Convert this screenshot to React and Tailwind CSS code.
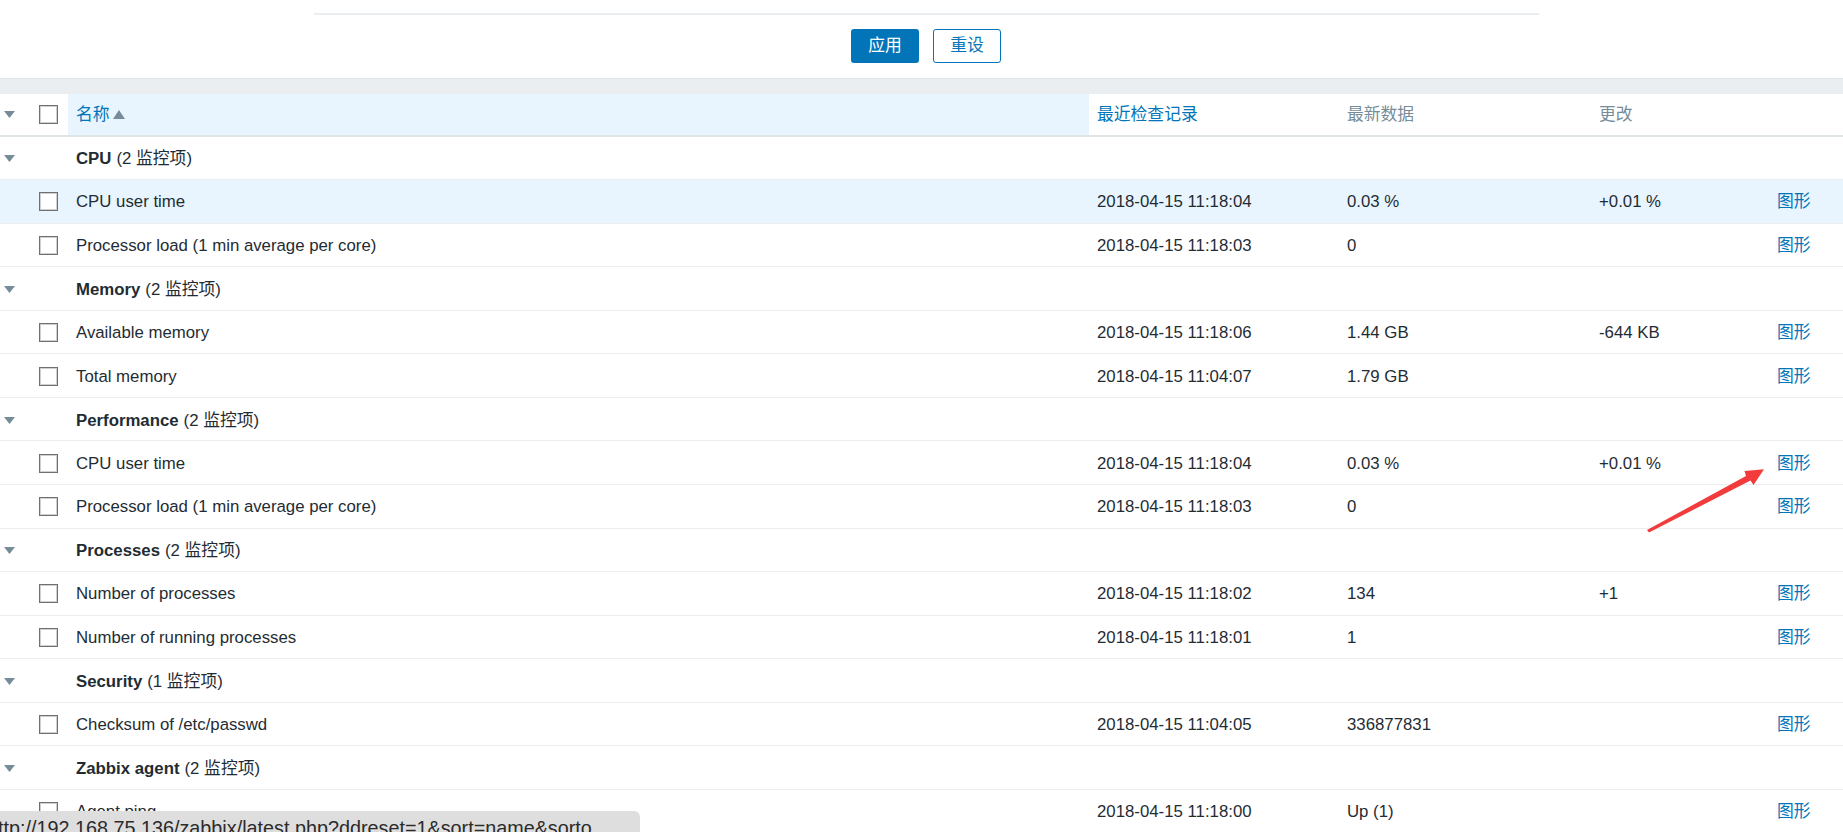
const font = { fontFamily: '"Liberation Sans", Arial, "Noto Sans CJK SC", sans-serif' };

const rows = [
  { group: "CPU", count: 2 },
  { name: "CPU user time", time: "2018-04-15 11:18:04", value: "0.03 %", change: "+0.01 %", hover: true },
  { name: "Processor load (1 min average per core)", time: "2018-04-15 11:18:03", value: "0", change: "" },
  { group: "Memory", count: 2 },
  { name: "Available memory", time: "2018-04-15 11:18:06", value: "1.44 GB", change: "-644 KB" },
  { name: "Total memory", time: "2018-04-15 11:04:07", value: "1.79 GB", change: "" },
  { group: "Performance", count: 2 },
  { name: "CPU user time", time: "2018-04-15 11:18:04", value: "0.03 %", change: "+0.01 %" },
  { name: "Processor load (1 min average per core)", time: "2018-04-15 11:18:03", value: "0", change: "" },
  { group: "Processes", count: 2 },
  { name: "Number of processes", time: "2018-04-15 11:18:02", value: "134", change: "+1" },
  { name: "Number of running processes", time: "2018-04-15 11:18:01", value: "1", change: "" },
  { group: "Security", count: 1 },
  { name: "Checksum of /etc/passwd", time: "2018-04-15 11:04:05", value: "336877831", change: "" },
  { group: "Zabbix agent", count: 2 },
  { name: "Agent ping", time: "2018-04-15 11:18:00", value: "Up (1)", change: "" },
  { name: "Agent version", time: "2018-04-15 11:04:01", value: "3.4.8", change: "" },
];

const Caret = () => (
  <svg width="11" height="7" viewBox="0 0 11 7" className="block">
    <path d="M0 0h11L5.5 7z" fill="#768d99" />
  </svg>
);

const Box = () => (
  <div className="w-[19px] h-[19px] border border-[#707070] bg-white shadow-[inset_0_0_0_1px_#cfcfcf]" />
);

export default function App() {
  return (
    <div className="relative w-[1843px] h-[832px] overflow-hidden bg-white text-[16.8px] text-[#1f2c33]" style={font}>
      {/* filter footer */}
      <div className="h-[78px] flex flex-col">
        <div className="pt-[13px] pl-[314px]">
          <div className="w-[1225px] h-[2px] bg-[#ebeef0]" />
        </div>
        <div className="flex justify-center gap-[14px] pl-[9px] mt-[14px]">
          <button className="w-[68px] h-[34px] rounded-[3px] bg-[#0275b8] text-white">应用</button>
          <button className="w-[68px] h-[34px] rounded-[3px] border border-[#0275b8] bg-white text-[#0275b8]">重设</button>
        </div>
      </div>
      <div className="h-[16px] bg-[#ebeef0] border-t border-[#dfe4e7]" />

      {/* header */}
      <div className="flex h-[42.5px] border-b-[2.5px] border-[#dfe4e7]">
        <div className="w-[30px] flex items-center pl-[4px] pt-[1px]"><Caret /></div>
        <div className="w-[38px] flex items-center pl-[9px]"><Box /></div>
        <div className="w-[1021px] flex items-center pl-[8px] pt-[1px] bg-[#e8f5ff] text-[#0275b8]">
          名称
          <svg width="12" height="9" viewBox="0 0 12 9" className="ml-[3px]">
            <path d="M0 9h12L6 0z" fill="#768d99" />
          </svg>
        </div>
        <div className="w-[250px] flex items-center pl-[8px] pt-[1px] text-[#0275b8]">最近检查记录</div>
        <div className="w-[252px] flex items-center pl-[8px] pt-[1px] text-[#768d99]">最新数据</div>
        <div className="w-[178px] flex items-center pl-[8px] pt-[1px] text-[#768d99]">更改</div>
        <div className="flex-1" />
      </div>

      {/* rows */}
      {rows.map((r, i) =>
        r.group ? (
          <div key={i} className="flex h-[43.57px] border-b border-[#ebeef0] pt-[2px]">
            <div className="w-[30px] flex items-center pl-[4px]"><Caret /></div>
            <div className="w-[38px]" />
            <div className="flex-1 flex items-center pl-[8px]">
              <span className="font-bold">{r.group}</span>
              <span className="ml-[5px]">({r.count} 监控项)</span>
            </div>
          </div>
        ) : (
          <div key={i} className={`flex h-[43.57px] border-b border-[#ebeef0] pt-[1px] ${r.hover ? "bg-[#e8f5ff]" : ""}`}>
            <div className="w-[30px]" />
            <div className="w-[38px] flex items-center pl-[9px]"><Box /></div>
            <div className="w-[1021px] flex items-center pl-[8px]">{r.name}</div>
            <div className="w-[250px] flex items-center pl-[8px]">{r.time}</div>
            <div className="w-[252px] flex items-center pl-[8px]">{r.value}</div>
            <div className="w-[178px] flex items-center pl-[8px]">{r.change}</div>
            <div className="flex-1 flex items-center pl-[8px] text-[#0275b8]">图形</div>
          </div>
        )
      )}

      {/* annotation arrow */}
      <svg className="absolute left-0 top-0 pointer-events-none" width="1843" height="832">
        <polygon
          points="1647,530 1746,476 1744.5,471 1764,469.3 1753.5,485 1750.5,480.5 1649,532.5"
          fill="#f23b3b"
        />
      </svg>

      {/* browser status bubble */}
      <div className="absolute left-0 top-[811px] w-[640px] h-[40px] bg-[#dedede] rounded-tr-[6px] overflow-hidden">
        <div className="ml-[-2px] mt-[5px] text-[19.8px] leading-[24px] text-[#2b2b2b] whitespace-nowrap">
          ttp://192.168.75.136/zabbix/latest.php?ddreset=1&amp;sort=name&amp;sorto
        </div>
      </div>
    </div>
  );
}
